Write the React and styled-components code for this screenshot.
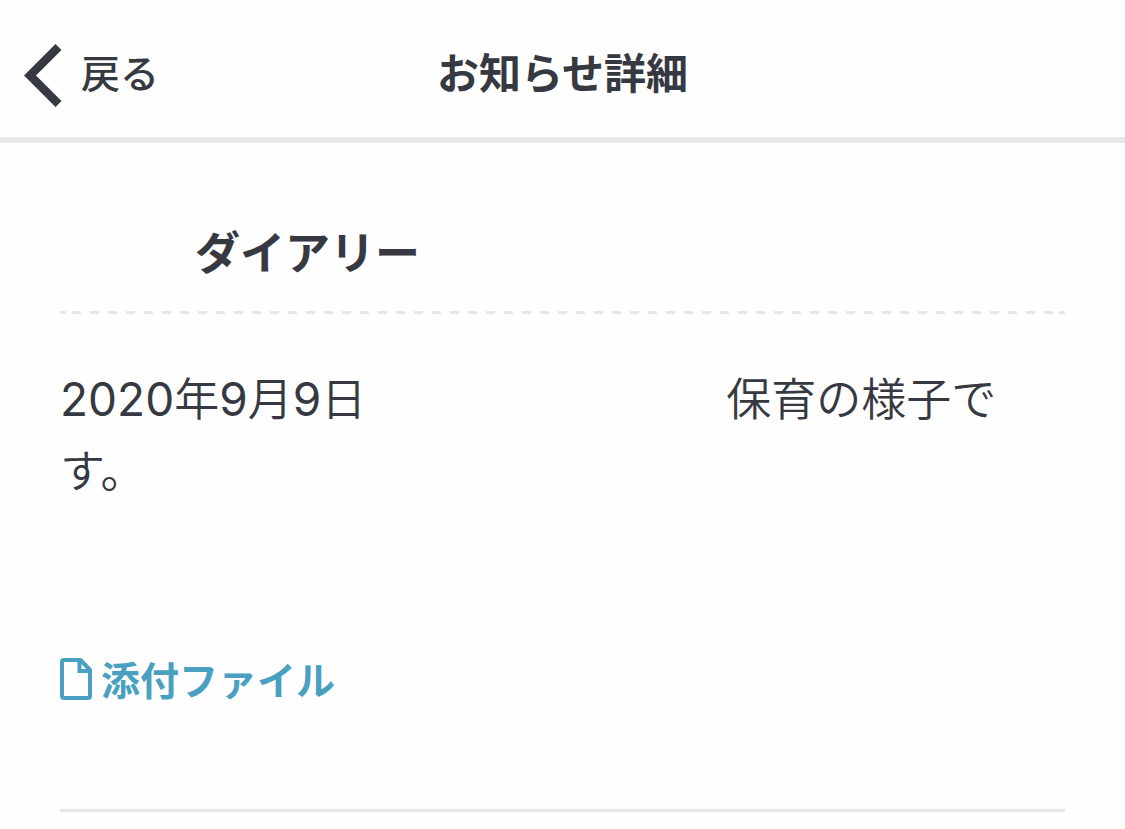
import React from "react";
import styled, { createGlobalStyle } from "styled-components";

const color = {
  text: "#363941",
  line: "#e7e7e9",
  link: "#49a0c0",
};

const GlobalStyle = createGlobalStyle`
  *, *::before, *::after { box-sizing: border-box; }
  body {
    margin: 0;
    background: #fefefe;
    color: ${color.text};
    font-family: Inter, "Noto Sans CJK JP", sans-serif;
  }
`;

const Header = styled.header`
  display: grid;
  grid-template-columns: 1fr auto 1fr;
  align-items: start;
  padding: 44px 24px 30px;
  border-bottom: 6px solid ${color.line};
`;

const BackButton = styled.button`
  display: flex;
  align-items: flex-start;
  gap: 18px;
  justify-self: start;
  padding: 0;
  border: 0;
  background: none;
  color: inherit;
  font: inherit;
  font-size: 39px;
  font-weight: 500;
  line-height: 60px;
  cursor: pointer;
`;

const HeaderTitle = styled.h1`
  margin: 0;
  font-size: 42px;
  font-weight: 700;
  line-height: 60px;
`;

const Article = styled.article`
  padding: 75px 60px 0;
`;

const ArticleTitle = styled.h2`
  margin: 0;
  padding-bottom: 21px;
  font-size: 45px;
  font-weight: 700;
  line-height: 72px;
`;

/* Space kept for a withheld name, measured in characters */
const Blank = styled.span`
  display: inline-block;
  width: ${({ $chars }) => $chars}em;
`;

const DashedRule = styled.hr`
  height: 3px;
  margin: 0;
  padding: 0 12px;
  border: 0;
  background:
    repeating-linear-gradient(90deg, ${color.line} 0 9px, transparent 9px 18px) content-box,
    linear-gradient(${color.line} 0 0) left / 6px 3px no-repeat,
    linear-gradient(${color.line} 0 0) right / 6px 3px no-repeat;
`;

const Body = styled.p`
  margin: 0;
  padding: 50px 0 143px;
  font-size: 45px;
  font-weight: 350;
  line-height: 72px;
  text-spacing-trim: space-all;
`;

const Digits = styled.span`
  font-size: 46px;
  font-weight: 400;
  line-height: 1;
`;

const Attachment = styled.section`
  padding-bottom: 98px;
  border-bottom: 3px solid ${color.line};
`;

const AttachmentLink = styled.a`
  display: inline-flex;
  align-items: center;
  gap: 9px;
  color: ${color.link};
  font-size: 39px;
  font-weight: 700;
  line-height: 60px;
  text-decoration: none;
  vertical-align: top;

  svg {
    margin-bottom: 4px;
  }
`;

function BackIcon() {
  return (
    <svg width="39" height="63" viewBox="0 0 39 63" aria-hidden="true">
      <path d="M31.500 0 37.500 6 12 31.500 37.500 57 31.500 63 0 31.500Z" fill="currentColor" />
    </svg>
  );
}

function FileIcon() {
  return (
    <svg width="32" height="42" viewBox="0 0 32 42" fill="none" aria-hidden="true">
      <path
        d="M4 2H20.5L30 12V38a2 2 0 0 1-2 2H4a2 2 0 0 1-2-2V4a2 2 0 0 1 2-2Z"
        stroke="currentColor"
        strokeWidth="4"
        strokeLinejoin="round"
      />
      <path d="M19.500 2V13H30" stroke="currentColor" strokeWidth="4" />
    </svg>
  );
}

export default function App() {
  return (
    <>
      <GlobalStyle />
      <Header>
        <BackButton type="button">
          <BackIcon />
          戻る
        </BackButton>
        <HeaderTitle>お知らせ詳細</HeaderTitle>
      </Header>
      <main>
        <Article>
          <ArticleTitle>
            <Blank $chars={3} />
            ダイアリー
          </ArticleTitle>
          <DashedRule />
          <Body>
            <Digits>2020</Digits>年<Digits>9</Digits>月<Digits>9</Digits>日
            <Blank $chars={8} />
            保育の様子です。
          </Body>
          <Attachment>
            <AttachmentLink href="#attachment">
              <FileIcon />
              添付ファイル
            </AttachmentLink>
          </Attachment>
        </Article>
      </main>
    </>
  );
}
